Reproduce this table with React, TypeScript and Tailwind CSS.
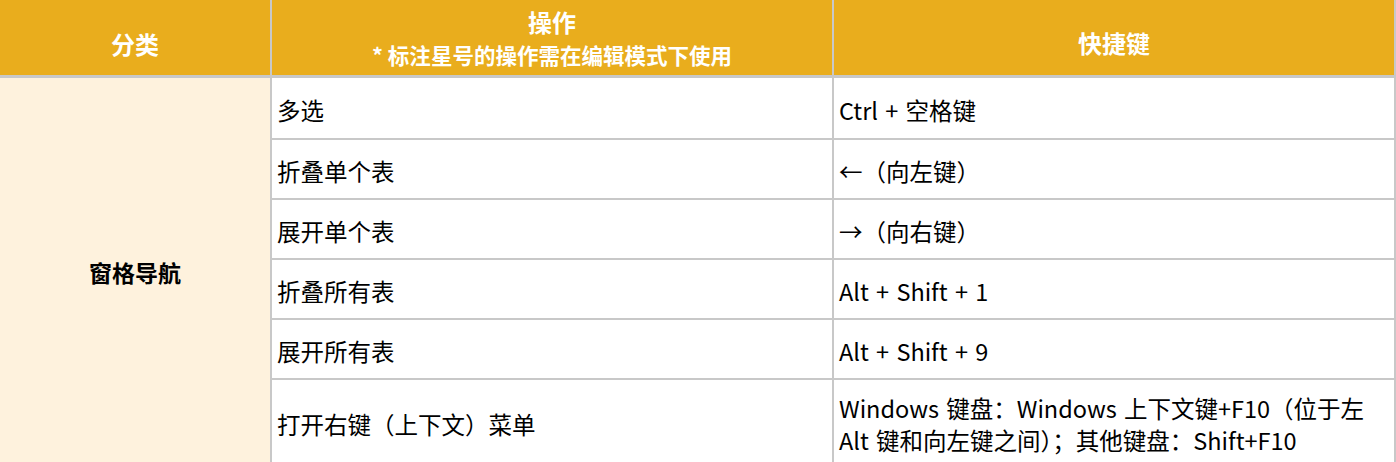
const rows = [
  { action: "多选", keys: "Ctrl + 空格键" },
  { action: "折叠单个表", keys: "←（向左键）" },
  { action: "展开单个表", keys: "→（向右键）" },
  { action: "折叠所有表", keys: "Alt + Shift + 1" },
  { action: "展开所有表", keys: "Alt + Shift + 9" },
  {
    action: "打开右键（上下文）菜单",
    keys: "Windows 键盘：Windows 上下文键+F10（位于左 Alt 键和向左键之间）；其他键盘：Shift+F10",
  },
];

const font = "font-['Noto_Sans_CJK_SC',sans-serif]";

export default function App() {
  return (
    <div className={`w-[1396px] h-[462px] overflow-hidden bg-white text-black ${font}`}>
      {/* header */}
      <div className="flex h-[78px] bg-[#e9ad1d] border-b-[3px] border-[#c8c8c8] text-white font-bold">
        <div className="w-[272px] flex items-center justify-center border-r-2 border-[#c8c8c8] text-[24px] pt-[12px]">
          分类
        </div>
        <div className="w-[562px] flex flex-col items-center justify-center border-r-2 border-[#c8c8c8] leading-none">
          <span className="text-[24px]">操作</span>
          <span className="text-[21.5px] mt-[10px]">* 标注星号的操作需在编辑模式下使用</span>
        </div>
        <div className="w-[562px] flex items-center justify-center border-r-2 border-[#c8c8c8] text-[24px] pt-[10px]">
          快捷键
        </div>
      </div>

      {/* body */}
      <div className="flex">
        <div className="w-[272px] shrink-0 bg-[#fef2dd] border-r-2 border-[#c8c8c8] flex items-center justify-center font-bold text-[23px]">
          窗格导航
        </div>
        <div className="flex-1 flex flex-col">
          {rows.map((r, i) => (
            <div
              key={r.action}
              className={`flex border-b-2 border-[#c8c8c8] text-[23.5px] leading-[32px] pt-[3px] ${
                i === 0 ? "h-[62px]" : i === rows.length - 1 ? "h-[86px]" : "h-[60px]"
              }`}
            >
              <div className="w-[562px] flex items-center pl-[5px] border-r-2 border-[#c8c8c8] -mt-[3px] pt-[3px]">
                {r.action}
              </div>
              <div className="w-[562px] flex items-center pl-[5px] pr-[8px] border-r-2 border-[#c8c8c8] -mt-[3px] pt-[3px] [word-spacing:2px]">
                {r.keys}
              </div>
            </div>
          ))}
        </div>
      </div>
    </div>
  );
}
